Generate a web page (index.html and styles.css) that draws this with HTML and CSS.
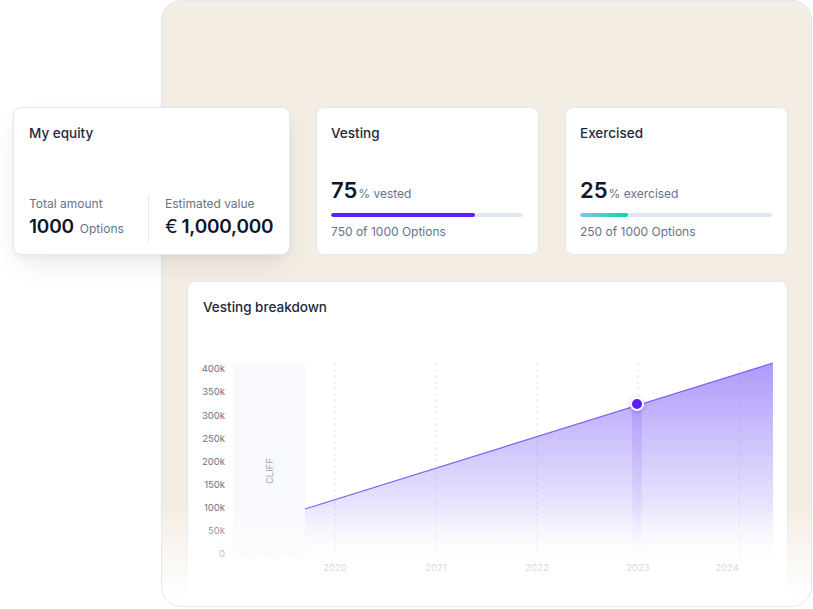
FILE: index.html
```html
<!DOCTYPE html>
<html lang="en">
<head>
    <meta charset="UTF-8">
    <meta name="viewport" content="width=device-width, initial-scale=1.0">
    <title>Equity overview</title>
    <link rel="stylesheet" href="styles.css">
</head>
<body>
    <div class="panel">
        <!-- Верхний ряд карточек -->
        <div class="cards">
            <div class="card equity">
                <div class="card-title">My equity</div>
                <div class="stats">
                    <div class="stat">
                        <div class="stat-label">Total amount</div>
                        <div class="stat-value">1000<span class="unit">Options</span></div>
                    </div>
                    <div class="stat stat-right">
                        <div class="stat-label">Estimated value</div>
                        <div class="stat-value"><span class="currency">€</span>1,000,000</div>
                    </div>
                </div>
            </div>

            <div class="card progress-card">
                <div class="card-title">Vesting</div>
                <div class="percent"><span class="big">75</span><span class="unit">% vested</span></div>
                <div class="bar"><div class="bar-fill vested" style="width: 75%"></div></div>
                <div class="note">750 of 1000 Options</div>
            </div>

            <div class="card progress-card">
                <div class="card-title">Exercised</div>
                <div class="percent"><span class="big">25</span><span class="unit">% exercised</span></div>
                <div class="bar"><div class="bar-fill exercised" style="width: 25%"></div></div>
                <div class="note">250 of 1000 Options</div>
            </div>
        </div>

        <!-- График -->
        <div class="card chart-card">
            <div class="card-title">Vesting breakdown</div>
            <svg class="chart" width="570" height="225" viewBox="0 0 570 225">
                <defs>
                    <linearGradient id="area" x1="0" y1="8" x2="0" y2="202" gradientUnits="userSpaceOnUse">
                        <stop offset="0" stop-color="#7c5cf6" stop-opacity="0.62"/>
                        <stop offset="1" stop-color="#7c5cf6" stop-opacity="0"/>
                    </linearGradient>
                    <linearGradient id="band" x1="0" y1="49" x2="0" y2="202" gradientUnits="userSpaceOnUse">
                        <stop offset="0" stop-color="#7c5cf6" stop-opacity="0.22"/>
                        <stop offset="1" stop-color="#7c5cf6" stop-opacity="0"/>
                    </linearGradient>
                </defs>

                <rect class="cliff" x="30" y="8" width="72" height="194"/>
                <text class="cliff-label" transform="translate(70 116) rotate(-90)" text-anchor="middle">CLIFF</text>

                <g class="grid">
                    <line x1="132" y1="8" x2="132" y2="202"/>
                    <line x1="233" y1="8" x2="233" y2="202"/>
                    <line x1="334" y1="8" x2="334" y2="202"/>
                    <line x1="435" y1="8" x2="435" y2="202"/>
                    <line x1="536" y1="8" x2="536" y2="202"/>
                    <line x1="32" y1="202" x2="568" y2="202"/>
                </g>

                <polygon points="102,154 570,8 570,202 102,202" fill="url(#area)"/>
                <rect x="429" y="49" width="10" height="153" fill="url(#band)"/>
                <line class="vest-line" x1="102" y1="154" x2="570" y2="8"/>
                <circle class="dot" cx="434" cy="49" r="6"/>

                <g class="y-labels" text-anchor="end">
                    <text x="22" y="17">400k</text>
                    <text x="22" y="40">350k</text>
                    <text x="22" y="64">300k</text>
                    <text x="22" y="87">250k</text>
                    <text x="22" y="110">200k</text>
                    <text x="22" y="133">150k</text>
                    <text x="22" y="156">100k</text>
                    <text x="22" y="179">50k</text>
                    <text x="22" y="202">0</text>
                </g>

                <g class="x-labels" text-anchor="middle">
                    <text x="132" y="216">2020</text>
                    <text x="233" y="216">2021</text>
                    <text x="334" y="216">2022</text>
                    <text x="435" y="216">2023</text>
                    <text x="536" y="216" text-anchor="end">2024</text>
                </g>
            </svg>
        </div>

        <div class="fade"></div>
    </div>
</body>
</html>
```

FILE: styles.css
```css
/* Основа */
body {
    margin: 0;
    font-family: Inter, "Noto Sans", sans-serif;
    background: #fff;
    color: #0f172a;
}

/* Бежевая подложка */
.panel {
    position: relative;
    box-sizing: border-box;
    display: flex;
    flex-direction: column;
    width: 651px;
    height: 607px;
    margin-left: 161px;
    padding: 106px 23px 0 25px;
    background: #f4ede3;
    border: 1px solid #e2e8f0;
    border-radius: 20px;
}

.fade {
    position: absolute;
    left: 0;
    right: 0;
    bottom: 0;
    height: 100px;
    border-radius: 0 0 19px 19px;
    background: linear-gradient(to bottom, rgba(255, 255, 255, 0), #fff 92%);
}

/* Карточки */
.cards {
    display: grid;
    grid-template-columns: 277px 223px 223px;
    gap: 26px;
    margin-left: -174px;
}

.card {
    box-sizing: border-box;
    display: flex;
    flex-direction: column;
    height: 148px;
    padding: 15px 15px 13px;
    background: #fff;
    border: 1px solid #e2e8f0;
    border-radius: 8px;
}

.progress-card {
    padding-left: 14px;
}

.card-title {
    font-size: 13.5px;
    line-height: 20px;
    font-weight: 500;
    color: #1e293b;
}

.equity {
    padding-bottom: 11px;
    box-shadow: 0 12px 28px -6px rgba(15, 23, 42, 0.1), 0 2px 6px rgba(15, 23, 42, 0.04);
}

.stats {
    display: flex;
    margin-top: auto;
}

.stat {
    flex-shrink: 0;
    width: 119px;
}

.stat-right {
    width: auto;
    padding-left: 16px;
    border-left: 1px solid #e2e8f0;
}

.stat-label {
    font-size: 12px;
    line-height: 18px;
    color: #64748b;
}

.stat-value {
    font-size: 19px;
    line-height: 28px;
    font-weight: 600;
    color: #0f172a;
    letter-spacing: -0.2px;
    white-space: nowrap;
}

.stat-value .unit {
    margin-left: 6px;
    font-size: 12px;
    font-weight: 400;
    color: #64748b;
    letter-spacing: 0;
}

.currency {
    margin-right: 4px;
    font-weight: 400;
}

/* Прогресс */
.percent {
    margin-top: auto;
    line-height: 28px;
}

.big {
    font-size: 22px;
    font-weight: 600;
    color: #0f172a;
}

.percent .unit {
    margin-left: 1px;
    font-size: 12px;
    color: #64748b;
}

.bar {
    height: 4px;
    margin-top: 5px;
    background: #e2e8f0;
    border-radius: 2px;
    overflow: hidden;
}

.bar-fill {
    height: 100%;
    border-radius: 2px;
}

.vested {
    background: #5b21f5;
}

.exercised {
    background: linear-gradient(90deg, #7cc7f2, #14d3a4);
}

.note {
    margin-top: 6px;
    font-size: 12px;
    line-height: 18px;
    color: #64748b;
}

/* График */
.chart-card {
    flex: 1;
    height: auto;
    margin-top: 26px;
    border-bottom: none;
    border-radius: 8px 8px 0 0;
}

.chart {
    display: block;
    margin-top: 38px;
    overflow: visible;
}

.cliff {
    fill: #f8f9fc;
}

.cliff-label {
    font-size: 9px;
    fill: #94a3b8;
    letter-spacing: 0.3px;
}

.grid line {
    stroke: #e2e8f0;
    stroke-width: 1;
    stroke-dasharray: 3 3;
}

.vest-line {
    stroke: #7c5cf6;
    stroke-width: 1.2;
}

.dot {
    fill: #5b1cf5;
    stroke: #fff;
    stroke-width: 2;
    filter: drop-shadow(0 1px 2px rgba(91, 28, 245, 0.3));
}

.y-labels text {
    font-size: 9.5px;
    fill: #64748b;
}

.x-labels text {
    font-size: 9.5px;
    fill: #7b879a;
}
```
